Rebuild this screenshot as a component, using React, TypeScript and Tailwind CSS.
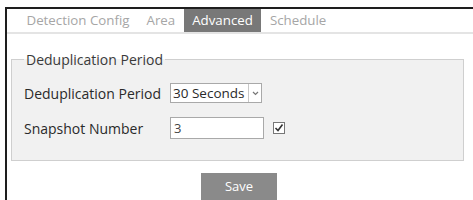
import React from 'react';

const tabs = ['Detection Config', 'Area', 'Advanced', 'Schedule'];

const App: React.FC = () => {
    const active = 'Advanced';
    return (
        <div className="w-[473px] h-[200px] bg-white overflow-hidden pl-[5px] pt-[7px]" style={{ fontFamily: '"Open Sans", "Noto Sans", sans-serif' }}>
            <div className="h-[193px] border-l-2 border-t-2 border-[#1e1e1e]">
                <div className="flex h-[25px] items-stretch border-b-2 border-[#e4e4e4] pl-[11px]">
                    {tabs.map(t => (
                        <div
                            key={t}
                            className={
                                t === active
                                    ? 'px-[8.5px] flex items-center text-[13.3px] text-white bg-[#787878]'
                                    : 'px-[8.5px] flex items-center text-[13.3px] text-[#a6a6a6]'
                            }
                        >
                            {t}
                        </div>
                    ))}
                </div>

                <fieldset className="ml-[4px] mr-[9px] mt-[15px] h-[112px] bg-[#f1f1f1] border border-[#cfcfcf] pl-[12px] pr-2">
                    <legend className="px-[2px] text-[14px] text-[#3a3a3a]">Deduplication Period</legend>
                    <div className="flex items-center mt-[12px] h-[22px]">
                        <span className="w-[146px] text-[14px] text-[#2a2a2a]">Deduplication Period</span>
                        <div className="flex h-[20px] border border-[#a9a9a9] bg-white">
                            <span className="w-[77px] pl-[2px] text-[13.5px] leading-[18px] text-[#2a2a2a]">30 Seconds</span>
                            <span className="w-[13px] border-l border-[#c8c8c8] flex items-center justify-center">
                                <svg width="7" height="5" viewBox="0 0 7 5"><path d="M1 1 L3.5 3.5 L6 1" fill="none" stroke="#777" strokeWidth="1.2" /></svg>
                            </span>
                        </div>
                    </div>
                    <div className="flex items-center mt-[12px] h-[24px]">
                        <span className="w-[146px] text-[14px] text-[#2a2a2a]">Snapshot Number</span>
                        <div className="w-[94px] h-[22px] border border-[#a9a9a9] bg-white pl-[3px] text-[13px] leading-[20px] text-[#444]">3</div>
                        <div className="ml-[9px] w-[12px] h-[12px] border border-[#777] bg-white flex items-center justify-center">
                            <svg width="10" height="10" viewBox="0 0 10 10"><path d="M1.5 5 L4 7.5 L8.5 1.5" fill="none" stroke="#333" strokeWidth="1.6" /></svg>
                        </div>
                    </div>
                </fieldset>

                <div className="flex justify-center mt-[12px] pr-[2px]">
                    <button className="w-[76px] h-[28px] bg-[#8a8a8a] text-white text-[13px]">Save</button>
                </div>
            </div>
        </div>
    );
};

export default App;
